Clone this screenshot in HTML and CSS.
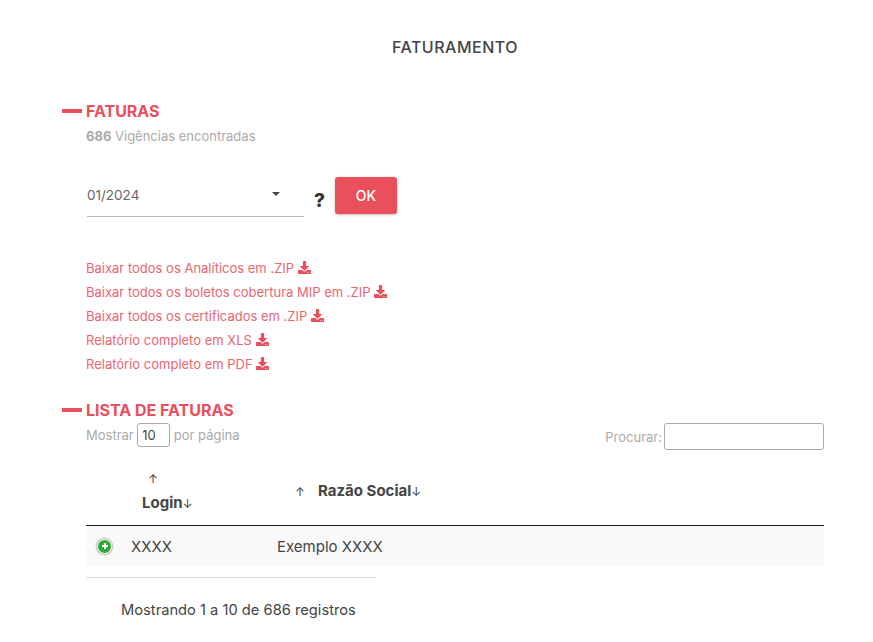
FILE: index.html
```html
<!DOCTYPE html>
<html lang="pt-BR">
<head>
<meta charset="UTF-8" />
<title>Faturamento</title>
<link rel="stylesheet" href="styles.css">
</head>
<body>

<svg class="icon-defs" width="0" height="0">
    <symbol id="icon-download" viewBox="0 0 512 512">
        <path d="M216 0h80c13 0 24 11 24 24v168h88c18 0 27 21 14 34L270 378c-7 7-20 7-27 0L90 226c-13-13-4-34 14-34h88V24c0-13 11-24 24-24zM512 376v112c0 13-11 24-24 24H24c-13 0-24-11-24-24V376c0-13 11-24 24-24h147l49 49c20 20 52 20 72 0l49-49h147c13 0 24 11 24 24zM388 464c0-11-9-20-20-20s-20 9-20 20 9 20 20 20 20-9 20-20zm64 0c0-11-9-20-20-20s-20 9-20 20 9 20 20 20 20-9 20-20z"/>
    </symbol>
</svg>

<div class="container">
    <h1 class="page-title">FATURAMENTO</h1>

    <h2 class="section-title">FATURAS</h2>
    <p class="found"><b>686</b> Vigências encontradas</p>

    <div class="period-row">
        <div class="period-select">
            <span>01/2024</span>
            <i class="caret"></i>
        </div>
        <span class="help">?</span>
        <button class="ok-button">OK</button>
    </div>

    <ul class="downloads">
        <li><a href="#">Baixar todos os Analíticos em .ZIP <svg class="dl"><use href="#icon-download"/></svg></a></li>
        <li><a href="#">Baixar todos os boletos cobertura MIP em .ZIP <svg class="dl"><use href="#icon-download"/></svg></a></li>
        <li><a href="#">Baixar todos os certificados em .ZIP <svg class="dl"><use href="#icon-download"/></svg></a></li>
        <li><a href="#">Relatório completo em XLS <svg class="dl"><use href="#icon-download"/></svg></a></li>
        <li><a href="#">Relatório completo em PDF <svg class="dl"><use href="#icon-download"/></svg></a></li>
    </ul>

    <h2 class="section-title">LISTA DE FATURAS</h2>
    <div class="table-tools">
        <label class="size-label">Mostrar <input class="page-size" type="text" value="10" /> por página</label>
        <label class="search-label">Procurar:<input class="search" type="text" /></label>
    </div>

    <div class="table-head">
        <div class="col-login"><span class="arrow">↑</span><span>Login<span class="arrow">↓</span></span></div>
        <div class="col-name"><span class="arrow up">↑</span><span>Razão Social<span class="arrow">↓</span></span></div>
    </div>

    <div class="table-row">
        <span class="expand"><svg viewBox="0 0 10 10"><path d="M4 2h2v2h2v2H6v2H4V6H2V4h2z"/></svg></span>
        <span class="cell-login">XXXX</span>
        <span class="cell-name">Exemplo XXXX</span>
    </div>

    <div class="table-foot"></div>
    <p class="table-info">Mostrando 1 a 10 de 686 registros</p>
</div>

</body>
</html>
```

FILE: styles.css
```css
:root {
    --font-family: Inter, 'Noto Sans', Arial, sans-serif;
    --red: #e9505c;
    --link: #ea6670;
    --text: #444;
    --muted: #aaa;
}

body {
    margin: 0;
    font-family: var(--font-family);
    color: var(--text);
    background: #fff;
}

.icon-defs {
    position: absolute;
}

.container {
    margin: 0 49px 0 86px;
    padding-top: 37px;
}

.page-title {
    margin: 0 0 44px;
    font-size: 16px;
    line-height: 20px;
    font-weight: 500;
    letter-spacing: 0.5px;
    text-align: center;
}

.section-title {
    display: flex;
    align-items: center;
    gap: 4px;
    margin: 0 0 0 -24px;
    font-size: 16px;
    line-height: 20px;
    font-weight: 700;
    color: var(--red);
}

.section-title::before {
    content: "";
    width: 20px;
    height: 4px;
    background: var(--red);
}

.found {
    margin: 5px 0 0;
    font-size: 13px;
    line-height: 20px;
    color: var(--muted);
}

.period-row {
    display: flex;
    align-items: flex-end;
    margin-top: 30px;
}

.period-select {
    display: flex;
    align-items: center;
    justify-content: space-between;
    box-sizing: border-box;
    width: 217px;
    height: 41px;
    margin-left: 1px;
    padding: 0 24px 2px 0;
    border-bottom: 1px solid #bbb;
    font-size: 13.5px;
    color: #666;
}

.caret {
    width: 0;
    height: 0;
    margin-bottom: 2px;
    border: 4px solid transparent;
    border-top: 4px solid #444;
    border-bottom: 0;
}

.help {
    width: 31px;
    margin-bottom: 6px;
    font-size: 19px;
    line-height: 20px;
    font-weight: 800;
    text-align: center;
    color: #333;
}

.ok-button {
    width: 62px;
    height: 37px;
    margin-bottom: 3px;
    border: none;
    border-radius: 3px;
    background: var(--red);
    color: #fff;
    font-family: inherit;
    font-size: 14px;
    font-weight: 500;
    box-shadow: 0 1px 3px rgba(0, 0, 0, 0.25);
}

.downloads {
    list-style: none;
    margin: 39px 0 24px;
    padding: 0;
}

.downloads li {
    height: 24px;
    font-size: 13px;
    line-height: 24px;
}

.downloads a {
    color: var(--link);
    text-decoration: none;
}

.dl {
    width: 13px;
    height: 13px;
    fill: var(--red);
    vertical-align: -1px;
}

.table-tools {
    display: flex;
    align-items: flex-start;
    justify-content: space-between;
    margin-top: 3px;
    font-size: 13px;
    color: var(--muted);
}

.table-tools label {
    display: flex;
    align-items: center;
}

.size-label {
    gap: 3.5px;
}

.search-label {
    gap: 2px;
}

.table-tools input {
    box-sizing: border-box;
    border: 1px solid #aaa;
    border-radius: 3px;
    font-family: inherit;
    color: var(--text);
    outline: none;
}

.page-size {
    width: 33px;
    height: 24px;
    padding: 0 4px;
    font-size: 13px;
}

.search {
    width: 160px;
    height: 27px;
}

.table-head {
    display: flex;
    align-items: center;
    box-sizing: border-box;
    height: 76px;
    padding-top: 8px;
    border-bottom: 1px solid #222;
    font-size: 15px;
    font-weight: 700;
}

.col-login {
    display: flex;
    flex-direction: column;
    align-items: flex-start;
    gap: 7px;
    margin-left: 56px;
    width: 153px;
}

.col-login > .arrow {
    margin-left: 6px;
}

.col-name {
    margin-top: -2px;
}

.col-name .up {
    margin-right: 13px;
}

.arrow {
    font-size: 12px;
    font-weight: 400;
}

.table-row {
    display: flex;
    align-items: center;
    height: 40px;
    background: #f9f9f9;
    font-size: 15px;
}

.expand {
    display: flex;
    align-items: center;
    justify-content: center;
    box-sizing: border-box;
    width: 15px;
    height: 15px;
    margin-left: 11px;
    border: 1px solid #fff;
    border-radius: 50%;
    background: #31a935;
    box-shadow: 0 0 0 1.5px #ccc;
}

.expand svg {
    width: 10px;
    height: 10px;
    fill: #fff;
}

.cell-login {
    margin-left: 19px;
    width: 146px;
}

.table-foot {
    width: 290px;
    margin-top: 11px;
    border-top: 1px solid #ddd;
}

.table-info {
    margin: 22px 0 0 35px;
    font-size: 14.7px;
    line-height: 20px;
}
```
